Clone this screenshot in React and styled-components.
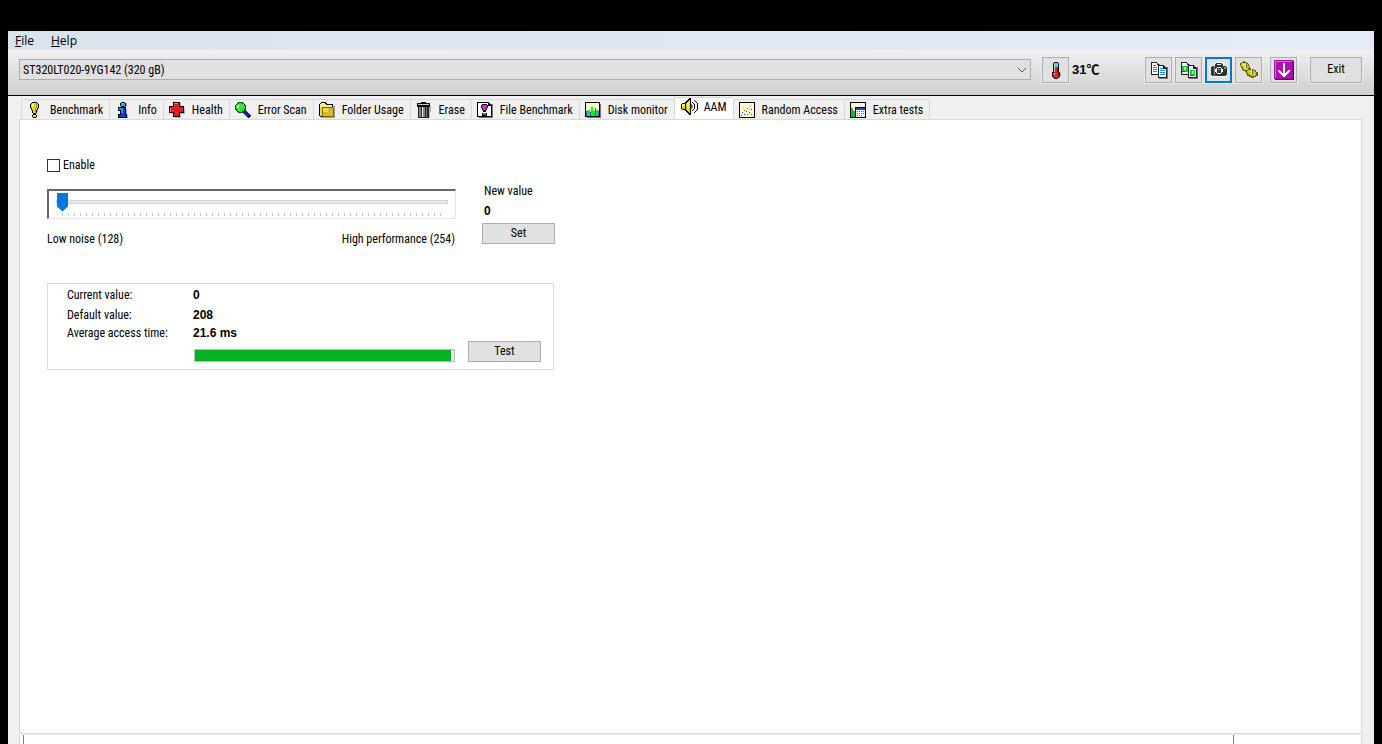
import React, { useState } from 'react';
import styled, { createGlobalStyle } from 'styled-components';

const GlobalStyle = createGlobalStyle`
  * {
    box-sizing: border-box;
  }

  body {
    margin: 0;
    background: #000000;
    color: #000000;
    font-family: "Roboto Condensed", "Liberation Sans", Arial, sans-serif;
    font-size: 12px;
    line-height: 16px;
  }

  button, input, select {
    font: inherit;
    color: inherit;
    margin: 0;
  }
`;

const Icon = ({ size = 16, children }) => (
  <svg
    width={size}
    height={size}
    viewBox={`0 0 ${size} ${size}`}
    shapeRendering="crispEdges"
    aria-hidden="true"
  >
    {children}
  </svg>
);

const BenchmarkIcon = () => (
  <Icon>
    <path d="M10 2h2v5h-1v3h-1v2H7v-1h3zM7 15h3v1H7z" fill="#888" opacity=".6" />
    <path d="M5 0h5v1h1v1h1v4h-1v2h-1v3H9v1H6v-1H5V8H4V6H3V2h1V1h1z" fill="#000" />
    <path d="M5 1h5v1h1v4h-1v2H9v3H6V8H5V6H4V2h1z" fill="#dede00" />
    <path d="M5 2h2v3H5z" fill="#ffffa0" />
    <path d="M9 2h1v4H9zM8 6h1v4H8z" fill="#959500" />
    <path d="M6 12h3v1h1v2H9v1H6v-1H5v-2h1z" fill="#000" />
    <path d="M6 13h3v2H6z" fill="#e8e800" />
  </Icon>
);

const InfoIcon = () => (
  <Icon>
    <path d="M7 1h5v4H7zM5 7h7v6h1v3H5z" fill="#777" opacity=".6" />
    <path d="M6 0h4v1h1v3h-1v1H6V4H5V1h1zM3 5h8v7h1v4H3v-4h2V9H3z" fill="#000" />
    <path d="M6 1h4v3H6z" fill="#19b8ff" />
    <path d="M4 6h6v7h1v2H4v-2h2V8H4z" fill="#0b3cf0" />
    <path d="M4 6h4v2H4zM6 8h2v3H6z" fill="#1d9cff" />
  </Icon>
);

const HealthIcon = () => (
  <Icon>
    <path d="M6 1h6v5h4v6h-4v4H6v-4H2" fill="#888" opacity=".55" />
    <path d="M4.500 .5h6v4h4v6h-4v4h-6v-4h-4v-6h4z" fill="#df2020" stroke="#000" />
    <path d="M5 1h4v1H6v4H1v4h1V6h4V2H5z" fill="#ff7b7b" />
  </Icon>
);

const ScanIcon = () => (
  <Icon>
    <path d="M9 10l6 6" stroke="#888" strokeWidth="3" />
    <path d="M8 8l7 7" stroke="#000" strokeWidth="4" />
    <path d="M9 9l5 5" stroke="#1020bd" strokeWidth="3" />
    <circle cx="5.500" cy="5.500" r="5.500" fill="#145c18" />
    <circle cx="5.500" cy="5.500" r="4.500" fill="#32e03c" />
    <path d="M3 3h2v1H3zM2 4h2v2H2zM5 5h1v1H5zM4 7h1v1H4zM7 3h1v1H7z" fill="#c8ffc4" />
  </Icon>
);

const FolderIcon = () => (
  <Icon>
    <path d="M3 4h13v12H2z" fill="#777" opacity=".7" />
    <path d="M2 0h5v1h1v1h6v13H1v-1H0V2h1V1h1z" fill="#000" />
    <path d="M2 1h4v1h1v1h6v2H1V2h1z" fill="#fff08a" />
    <path d="M1 5h12v9H1z" fill="#f0d640" />
    <path d="M3 5h11v1h1v9H3z" fill="#7a6200" />
    <path d="M4 6h10v8H4z" fill="#ddb822" />
    <path d="M4 6h5v4H4z" fill="#f3d64c" />
  </Icon>
);

const EraseIcon = () => (
  <Icon>
    <path d="M3 4h12l-1 12H4z" fill="#777" opacity=".5" />
    <path d="M5 0h5v1H5zM1 1h13v4H1z" fill="#000" />
    <path d="M2 2h11v1H2z" fill="#c9c9c9" />
    <path d="M2 5h11v11H2z" fill="#222" />
    <path d="M3 5h2v10H3zM6 5h3v10H6z" fill="#888" />
    <path d="M6 5h1v10H6z" fill="#eee" />
    <path d="M10 5h1v10h-1z" fill="#777" />
  </Icon>
);

const FileBenchmarkIcon = () => (
  <Icon>
    <path d="M3 2h13v14H2z" fill="#777" />
    <path d="M0 0h12v1h1v1h1v1h1v12H0z" fill="#000" />
    <path d="M1 1h10v3h3v10H1z" fill="#fff" />
    <path d="M5 2h5v1h1v3h-1v2H9v2H6V8H5V6H4V3h1z" fill="#000" />
    <path d="M5 3h5v3H9v2H6V6H5z" fill="#df21df" />
    <path d="M5 11h5v3H5z" fill="#000" />
    <path d="M6 11h3v2H6z" fill="#df21df" />
  </Icon>
);

const MonitorIcon = () => (
  <Icon>
    <path d="M2 2h14v14H2z" fill="#777" />
    <path d="M0 0h15v15H0z" fill="#000" />
    <path d="M1 1h13v13H1z" fill="#fffbc8" />
    <path d="M1 9h2v5H1zM5 10h2v4H5zM10 6h1v8h-1zM13 9h1v5h-1z" fill="#374ff0" />
    <path d="M2 10h1v4H2zM3 8h2v6H3zM6 5h2v9H6zM8 9h2v5H8zM11 8h2v6h-2z" fill="#00f21c" />
  </Icon>
);

const SpeakerIcon = () => (
  <Icon size={18}>
    <path d="M8 0h2v17H8v-1H7v-1H6v-1H5v-1H4v-1H1v-1H0V6h1V5h3V4h1V3h1V2h1V1h1z" fill="#000" />
    <path d="M1 6h3v5H1zM5 5h1V4h1V3h1V2h1v13H8v-1H7v-1H6v-1H5z" fill="#e6d21c" />
    <path d="M1 6h3v2H1zM6 5h2v5H6z" fill="#fff98a" />
    <path d="M10 6h1v1h1v3h-1v1h-1z" fill="#777" />
    <path d="M11 4h1v1h1v1h1v5h-1v1h-1v1h-1v-1h1v-1h1V6h-1V5h-1zM13 2h1v1h1v1h1v1h1v7h-1v1h-1v1h-1v1h-1v-1h1v-1h1v-1h1V5h-1V4h-1V3h-1z" fill="#111" />
  </Icon>
);

const RandomIcon = () => (
  <Icon>
    <path d="M0 0h16v16H0z" fill="#000" />
    <path d="M1 1h14v14H1z" fill="#fffbd2" />
    <path d="M3 10h1v1H3zM5 12h1v1H5zM7 9h1v1H7zM10 10h1v1h-1zM12 7h1v1h-1z" fill="#1c2bdd" />
    <path d="M2 13h1v1H2zM5 8h1v1H5zM8 6h1v1H8zM8 12h1v1H8zM12 12h1v1h-1z" fill="#e22727" />
    <path d="M4 5h1v1H4zM10 4h1v1h-1zM12 3h1v1h-1zM10 7h1v1h-1z" fill="#f3a71a" />
  </Icon>
);

const ExtraIcon = () => (
  <Icon>
    <path d="M0 0h16v16H0z" fill="#000" />
    <path d="M1 1h14v14H1z" fill="#fffbd2" />
    <path d="M1 6h2v9H1zM3 9h2v6H3z" fill="#15bb32" />
    <path d="M5 5h11v11H5z" fill="#000" />
    <path d="M6 6h9v9H6z" fill="#fff" />
    <path d="M6 6h9v2H6z" fill="#303adb" />
    <path d="M7 9h1v1H7zM9 9h1v1H9zM11 9h1v1h-1zM13 9h1v1h-1zM7 11h1v1H7zM9 11h1v1H9zM11 11h1v1h-1zM13 11h1v1h-1zM7 13h1v1H7zM9 13h1v1H9zM11 13h1v1h-1z" fill="#dd2374" />
  </Icon>
);

const ThermometerIcon = () => (
  <Icon size={18}>
    <path d="M9 2h3v8l2 3-1 4H7" fill="#888" opacity=".7" />
    <path d="M7 1h4v1h1v9h1v5h-1v1h-1v1H7v-1H6v-1H5v-5h1V2h1z" fill="#111" />
    <path d="M7 6h4v5h1v5h-1v1H7v-1H6v-4h1z" fill="#e3222b" />
    <path d="M7 2h4v4H7z" fill="#65d5dc" />
    <path d="M7 6h1v5H7zM7 12h1v2H7z" fill="#ffaaa8" />
    <path d="M10 6h1v5h1v5h-1v-4h-1z" fill="#9a0911" />
  </Icon>
);

const CopyIcon = ({ picture }) => (
  <Icon size={18}>
    <path d="M3 3h7v11H3zM9 6h9v12H9z" fill="#777" />
    <path d="M1 1h6v1h1v1h1v11H1z" fill="#222" />
    <path d="M2 2h5v2h1v9H2z" fill="#fff" />
    <path d="M8 4h6v1h1v1h1v1h1v10H8z" fill="#222" />
    <path d="M9 5h4v3h3v8H9z" fill="#fff" />
    {picture ? (
      <>
        <path d="M2 5h6v6H2zM10 9h5v6h-5z" fill="#13c83d" />
        <path d="M4 6h2v3H4zM12 10h2v3h-2z" fill="#dce431" />
        <path d="M2 10h3v1H2zM10 14h3v1h-3z" fill="#164fae" />
      </>
    ) : (
      <path d="M3 4h3v1H3zM3 6h4v1H3zM3 8h4v1H3zM3 10h4v1H3zM10 7h3v1h-3zM10 9h5v1h-5zM10 11h5v1h-5zM10 13h5v1h-5z" fill="#188ee6" />
    )}
  </Icon>
);

const CameraIcon = () => (
  <Icon size={18}>
    <path d="M1 5h3V3h2V1h7v2h1v2h3v11H1z" fill="#fff" />
    <path d="M6 2h6v1h1v2h3v1h1v8h-1v1H2v-1H1V6h1V5h3V3h1z" fill="#333" />
    <path d="M7 3h4v1H7z" fill="#e7e7e7" />
    <path d="M4 5h1v10H4z" fill="#888" />
    <path d="M7 6h4v1h1v1h1v3h-1v1h-1v1H7v-1H6v-1H5V8h1V7h1z" fill="#f0f0f0" />
    <path d="M7 7h4v5H7z" fill="#333" />
    <path d="M8 8h2v1H8z" fill="#aaa" />
    <path d="M14 6h2v2h-2z" fill="#35d84b" />
  </Icon>
);

const GearsIcon = () => (
  <Icon size={18}>
    <path d="M2 1h1V0h2v1h2v1h1v1h1v2h1v2H9v3H7v1H5v-1H3V9H2V7H1V5H0V2h2z" fill="#6b6700" />
    <path d="M2 2h5v1h1v2h1v3H8v1H4V8H3V6H2V5H1V3h1z" fill="#d0cc18" />
    <path d="M8 7h3v1h3v1h2v2h2v4h-2v1h-2v1h-3v-1H9v-1H7v-2H6V9h2z" fill="#6b6700" />
    <path d="M8 9h6v1h1v1h1v3h-1v1h-4v-1H9v-1H8v-1H7v-2h1z" fill="#c9c514" />
    <path d="M3 3h2v1H3zM2 4h1v1H2zM4 7h1v1H4zM9 10h1v1H9zM10 13h1v1h-1zM14 13h1v1h-1z" fill="#ffff74" />
    <path d="M5 2h1v5H5zM11 8h1v5h-1z" fill="#eee" />
    <path d="M6 2h1v5H6zM12 8h1v5h-1z" fill="#626262" />
  </Icon>
);

const ArrowIcon = () => (
  <Icon size={20}>
    <path d="M1 1h19v19H1z" fill="#500352" />
    <path d="M0 0h19v19H0z" fill="#9a0a9e" />
    <path d="M1 1h17v17H1z" fill="#b30bb7" />
    <path d="M1 1h17v1H1zM1 1h1v17H1z" fill="#e268e4" />
    <path d="M9 3h2v10h1v-1h1v-1h1v-1h2v2h-1v1h-1v1h-1v1h-1v1h-1v1H9v-1H8v-1H7v-1H6v-1H5v-1H4v-2h2v1h1v1h1v1h1z" fill="#fff" />
  </Icon>
);

const tabs = [
  { name: 'Benchmark', icon: BenchmarkIcon },
  { name: 'Info', icon: InfoIcon },
  { name: 'Health', icon: HealthIcon },
  { name: 'Error Scan', icon: ScanIcon },
  { name: 'Folder Usage', icon: FolderIcon },
  { name: 'Erase', icon: EraseIcon },
  { name: 'File Benchmark', icon: FileBenchmarkIcon },
  { name: 'Disk monitor', icon: MonitorIcon },
  { name: 'AAM', icon: SpeakerIcon },
  { name: 'Random Access', icon: RandomIcon },
  { name: 'Extra tests', icon: ExtraIcon },
];

export default function App() {
  const [active, setActive] = useState('AAM');
  const [level, setLevel] = useState(128);

  return (
    <>
      <GlobalStyle />
      <Window>
        <MenuBar>
          <MenuItem><u>F</u>ile</MenuItem>
          <MenuItem><u>H</u>elp</MenuItem>
        </MenuBar>

        <Toolbar>
          <DriveBox>
            <DriveSelect aria-label="Drive">
              <option>ST320LT020-9YG142 (320 gB)</option>
            </DriveSelect>
            <svg width="10" height="6" viewBox="0 0 10 6" aria-hidden="true">
              <path d="M1 1l4 4 4-4" fill="none" stroke="#555" />
            </svg>
          </DriveBox>
          <ToolButton aria-label="Temperature"><ThermometerIcon /></ToolButton>
          <Temperature>31℃</Temperature>
          <ToolGroup>
            <ToolButton aria-label="Copy text"><CopyIcon /></ToolButton>
            <ToolButton aria-label="Copy picture"><CopyIcon picture /></ToolButton>
            <ToolButton aria-label="Screenshot" $focused><CameraIcon /></ToolButton>
            <ToolButton aria-label="Options"><GearsIcon /></ToolButton>
          </ToolGroup>
          <ToolButton aria-label="Minimize to tray"><ArrowIcon /></ToolButton>
          <ExitButton>Exit</ExitButton>
        </Toolbar>

        <Content>
          <TabList role="tablist">
            {tabs.map(({ name, icon: TabIcon }) => (
              <Tab
                key={name}
                role="tab"
                aria-selected={active === name}
                $active={active === name}
                onClick={() => setActive(name)}
              >
                <TabIcon />
                {name}
              </Tab>
            ))}
          </TabList>

          <Panel role="tabpanel">
            <EnableLabel>
              <Checkbox type="checkbox" />
              Enable
            </EnableLabel>

            <Controls>
              <div>
                <SliderFrame>
                  <Slider
                    type="range"
                    min="128"
                    max="254"
                    step="2"
                    value={level}
                    aria-label="Noise level"
                    onChange={(e) => setLevel(Number(e.target.value))}
                  />
                  <Ticks />
                </SliderFrame>
                <Scale>
                  <span>Low noise (128)</span>
                  <span>High performance (254)</span>
                </Scale>
              </div>
              <NewValue>
                <span>New value</span>
                <Value>{level === 128 ? 0 : level}</Value>
                <Button>Set</Button>
              </NewValue>
            </Controls>

            <Results>
              <Readings>
                <dt>Current value:</dt>
                <dd>0</dd>
                <dt>Default value:</dt>
                <dd>208</dd>
                <dt>Average access time:</dt>
                <dd>21.6 ms</dd>
              </Readings>
              <TestRow>
                <Progress value="99" max="100" aria-label="Test progress" />
                <Button>Test</Button>
              </TestRow>
            </Results>
          </Panel>
        </Content>

        <StatusBar>
          <StatusCell />
          <StatusCell />
        </StatusBar>
      </Window>
    </>
  );
}

const Window = styled.div`
  display: flex;
  flex-direction: column;
  min-height: 100vh;
  padding: 31px 8px 0;
  background: #f0f0f0 content-box;
`;

const MenuBar = styled.nav`
  display: flex;
  height: 19px;
  background: linear-gradient(90deg, #dae3eb, #e6ecf7);
`;

const MenuItem = styled.button`
  padding: 0 7px;
  margin-right: 3px;
  border: none;
  background: none;
  font-family: "Open Sans", sans-serif;
  font-size: 12px;
`;

const Toolbar = styled.header`
  display: flex;
  align-items: center;
  height: 46px;
  padding: 0 12px 6px 11px;
  border-bottom: 1px solid #000000;
  background: linear-gradient(#f0f0f0, #cfcfcf);
`;

const DriveBox = styled.div`
  position: relative;
  flex: 1;
  margin-right: 11px;

  svg {
    position: absolute;
    right: 4px;
    top: 8px;
    pointer-events: none;
  }
`;

const DriveSelect = styled.select`
  display: block;
  width: 100%;
  height: 21px;
  padding: 0 3px;
  appearance: none;
  border: 1px solid #adadad;
  border-radius: 0;
  background: #e1e1e1;
`;

const Button = styled.button`
  width: 73px;
  height: 21px;
  padding: 0;
  border: 1px solid #adadad;
  background: #e1e1e1;
  line-height: 19px;
`;

const ToolButton = styled(Button)`
  display: flex;
  align-items: center;
  justify-content: center;
  width: 27px;
  height: 26px;
  box-shadow: 0 0 0 1px #ececec;
  ${({ $focused }) => $focused && 'border: 2px solid #0078d7;'}
`;

const ExitButton = styled(ToolButton)`
  width: 52px;
  margin-left: 13px;
`;

const ToolGroup = styled.div`
  display: flex;
  gap: 3px;
  margin-right: 8px;
`;

const Temperature = styled.span`
  width: 76px;
  padding-left: 3px;
  font-family: "Liberation Sans", "Noto Sans CJK SC", sans-serif;
  font-size: 13px;
  font-weight: bold;
`;

const Content = styled.main`
  display: flex;
  flex: 1;
  flex-direction: column;
  padding: 1px 12px 0 11px;
`;

const TabList = styled.div`
  display: flex;
  align-items: flex-end;
  height: 22px;
  padding-left: 2px;
`;

const Tab = styled.button`
  display: flex;
  align-items: center;
  gap: 7px;
  height: 20px;
  padding: 0 6px 0 5px;
  border: 1px solid #d9d9d9;
  border-width: 1px 0 0 1px;
  background: #f0f0f0;
  white-space: nowrap;

  &:last-child {
    border-right-width: 1px;
  }

  ${({ $active }) => $active && `
    height: 23px;
    margin-bottom: -1px;
    padding: 0 6px 4px;
    gap: 5px;
    background: #ffffff;
  `}
`;

const Panel = styled.section`
  flex: 1;
  padding: 37px 27px;
  border: 1px solid #d9d9d9;
  background: #ffffff;
`;

const EnableLabel = styled.label`
  display: flex;
  align-items: center;
  gap: 3px;
  width: max-content;
`;

const Checkbox = styled.input`
  width: 13px;
  height: 13px;
  appearance: none;
  border: 1px solid #333333;
  background: #ffffff;

  &:checked {
    box-shadow: inset 0 0 0 2px #ffffff;
    background: #333333;
  }
`;

const Controls = styled.div`
  display: flex;
  align-items: flex-start;
  gap: 26px;
  margin-top: 10px;
`;

const SliderFrame = styled.div`
  width: 409px;
  height: 30px;
  margin-top: 6px;
  padding: 1px 7px 0;
  border: 1px solid #e3e3e3;
  border-top: 2px solid #696969;
  border-left: 2px solid #696969;
`;

const Slider = styled.input`
  display: block;
  width: 100%;
  height: 19px;
  appearance: none;
  background: none;

  &::-webkit-slider-runnable-track {
    height: 4px;
    border: 1px solid #d6d6d6;
    background: #e7eaea;
  }

  &::-webkit-slider-thumb {
    width: 11px;
    height: 19px;
    margin-top: -8px;
    appearance: none;
    background: #0078d7;
    clip-path: polygon(0 0, 100% 0, 100% 14px, 50% 100%, 0 14px);
  }
`;

const Ticks = styled.div`
  height: 3px;
  margin: 2px 5px 0 6px;
  background: repeating-linear-gradient(90deg, #c4c4c4 0 1px, transparent 1px 6px);
`;

const Scale = styled.div`
  display: flex;
  justify-content: space-between;
  margin-top: 12px;
  padding-right: 1px;
`;

const NewValue = styled.div`
  display: flex;
  flex-direction: column;
  gap: 4px;

  span, strong {
    padding-left: 2px;
  }
`;

const Value = styled.strong`
  font-family: "Liberation Sans", Arial, sans-serif;
  font-size: 12px;
`;

const Results = styled.section`
  width: 507px;
  height: 87px;
  margin-top: 36px;
  padding: 1px 12px 0 19px;
  border: 1px solid #dcdcdc;
`;

const Readings = styled.dl`
  display: grid;
  grid-template-columns: 126px 1fr;
  grid-template-rows: 20px 20px 16px;
  align-items: center;
  margin: 0;

  dd {
    margin: 0;
    font-family: "Liberation Sans", Arial, sans-serif;
    font-size: 12px;
    font-weight: bold;
  }
`;

const TestRow = styled.div`
  display: flex;
  align-items: flex-end;
  justify-content: flex-end;
  gap: 13px;
`;

const Progress = styled.progress`
  width: 261px;
  height: 13px;
  appearance: none;
  border: 1px solid #bcbcbc;

  &::-webkit-progress-bar {
    background: #e6e6e6;
  }

  &::-webkit-progress-value {
    background: #06b025;
  }
`;

const StatusBar = styled.footer`
  display: grid;
  grid-template-columns: 1fr 128px;
  height: 9px;
  margin: 1px 12px 0 11px;
  padding-left: 3px;
  border: 1px solid #d9d9d9;
  border-width: 0 1px;
  background: #ffffff;
`;

const StatusCell = styled.div`
  border-left: 1px solid #7f7f7f;
`;
